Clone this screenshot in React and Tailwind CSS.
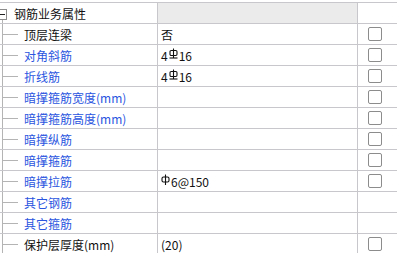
import React from 'react';

const rows = [
  { name: '顶层连梁', value: '否', blue: false, check: true },
  { name: '对角斜筋', value: 'grade', blue: true, check: true },
  { name: '折线筋', value: 'grade', blue: true, check: true },
  { name: '暗撑箍筋宽度(mm)', value: '', blue: true, check: true },
  { name: '暗撑箍筋高度(mm)', value: '', blue: true, check: true },
  { name: '暗撑纵筋', value: '', blue: true, check: true },
  { name: '暗撑箍筋', value: '', blue: true, check: true },
  { name: '暗撑拉筋', value: 'phi', blue: true, check: true },
  { name: '其它钢筋', value: '', blue: true, check: false },
  { name: '其它箍筋', value: '', blue: true, check: false },
  { name: '保护层厚度(mm)', value: '(20)', blue: false, check: true },
];

// HRB400-style grade mark drawn as a small symbol
const GradeMark = () => (
  <svg width="9" height="12" viewBox="0 0 9 12" className="mx-[1px] -mt-[3px]">
    <rect x="1" y="2.5" width="7" height="5" rx="1.2" fill="none" stroke="#111" strokeWidth="1.1" />
    <line x1="4.5" y1="0.5" x2="4.5" y2="10" stroke="#111" strokeWidth="1.1" />
    <line x1="0.5" y1="10" x2="8.5" y2="10" stroke="#111" strokeWidth="1.1" />
  </svg>
);

const PhiMark = () => (
  <svg width="9" height="12" viewBox="0 0 9 12" className="mr-[1px] -mt-[3px]">
    <rect x="1" y="3" width="7" height="5" rx="1.5" fill="none" stroke="#111" strokeWidth="1.1" />
    <line x1="4.5" y1="0.5" x2="4.5" y2="11" stroke="#111" strokeWidth="1.1" />
  </svg>
);

const Branch = () => (
  <svg width="24" height="20" viewBox="0 0 24 20" className="shrink-0">
    <line x1="2.5" y1="0" x2="2.5" y2="20" stroke="#b4b4b4" strokeWidth="1" />
    <line x1="3" y1="10.5" x2="18" y2="10.5" stroke="#b4b4b4" strokeWidth="1" />
  </svg>
);

const Value = ({ v }) => {
  if (v === 'grade') {
    return (
      <span className="flex items-center">
        4<GradeMark />16
      </span>
    );
  }
  if (v === 'phi') {
    return (
      <span className="flex items-center">
        <PhiMark />6@150
      </span>
    );
  }
  return <span>{v}</span>;
};

export default function App() {
  return (
    <div
      className="w-[397px] h-[253px] overflow-hidden bg-white text-[12px] leading-none text-[#111]"
      style={{ fontFamily: '"Microsoft YaHei", "Noto Sans CJK SC", "Noto Sans", sans-serif' }}
    >
      <div className="h-[2px]" />
      <div className="border-t border-[#c8c8cc]">
        {/* group header */}
        <div className="flex h-[21px] border-b border-[#c8c8cc]">
          <div className="w-[158px] shrink-0 flex items-center border-r border-[#c8c8cc]">
            <svg width="14" height="20" viewBox="0 0 14 20" className="shrink-0">
              <rect x="-3.5" y="6.5" width="10" height="10" fill="#fff" stroke="#8c8c8c" strokeWidth="1" />
              <line x1="-1" y1="11.5" x2="5" y2="11.5" stroke="#222" strokeWidth="1" />
              <line x1="2.5" y1="17" x2="2.5" y2="20" stroke="#b4b4b4" strokeWidth="1" />
            </svg>
            <span className="pt-[1px]">钢筋业务属性</span>
          </div>
          <div className="w-[200px] shrink-0 bg-[#ebebeb] border-r border-[#c8c8cc]" />
          <div className="flex-1" />
        </div>
        {rows.map((r) => (
          <div key={r.name} className="flex h-[21px] border-b border-[#c8c8cc]">
            <div className="w-[158px] shrink-0 flex items-center border-r border-[#c8c8cc]">
              <Branch />
              <span className={`pt-[1px] ${r.blue ? 'text-[#2a55e0]' : 'text-[#111]'}`}>{r.name}</span>
            </div>
            <div className="w-[200px] shrink-0 flex items-center pl-[3px] pt-[1px] border-r border-[#c8c8cc]">
              <Value v={r.value} />
            </div>
            <div className="flex-1 flex items-center pl-[10px]">
              {r.check && (
                <div className="w-[14px] h-[14px] rounded-[2px] border border-[#8c8c8c] bg-white" />
              )}
            </div>
          </div>
        ))}
      </div>
    </div>
  );
}
